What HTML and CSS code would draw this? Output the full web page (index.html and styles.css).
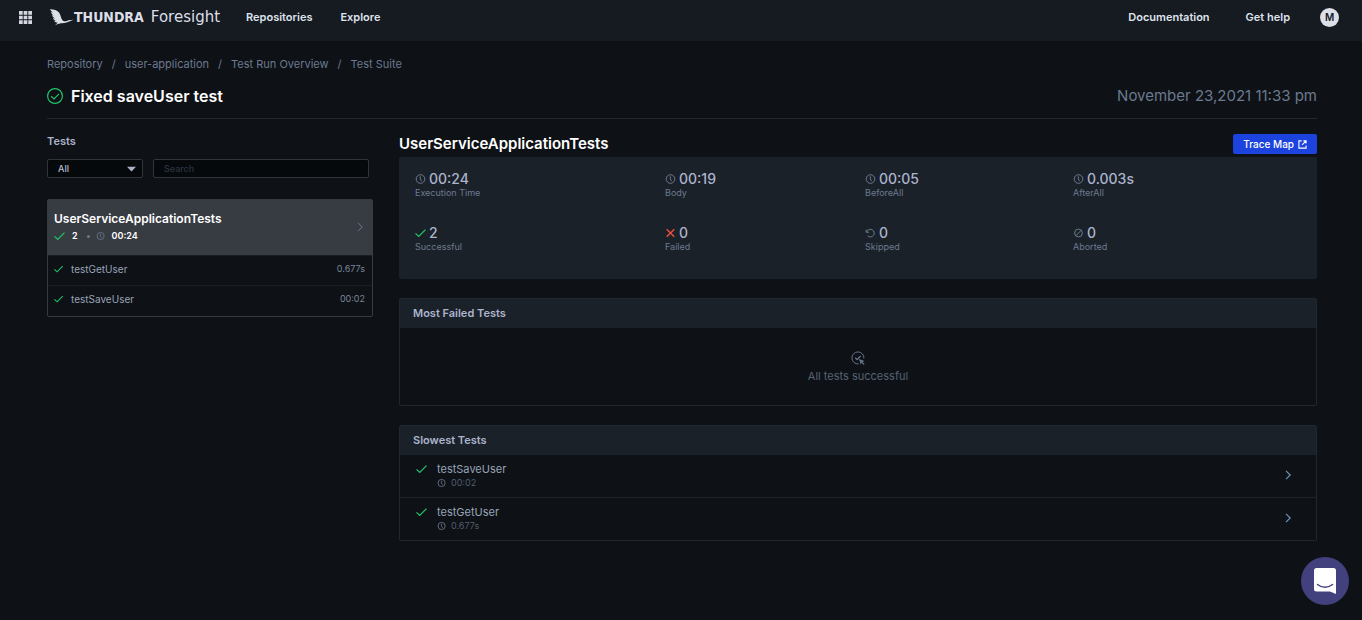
FILE: index.html
```html
<!DOCTYPE html>
<html lang="en">
<head>
<meta charset="utf-8">
<meta name="viewport" content="width=device-width, initial-scale=1">
<title>Thundra Foresight - Test Suite</title>
<link rel="stylesheet" href="styles.css">
</head>
<body>
<svg class="sprite" aria-hidden="true">
  <symbol id="clock" viewBox="0 0 12 12"><circle cx="5.500" cy="6" r="4.300"/><path d="M5.300 3.400v2.800l1.400 1.900"/></symbol>
  <symbol id="check" viewBox="0 0 12 12"><path d="M.5 6.400l3.200 3L10.500 2.600"/></symbol>
  <symbol id="cross" viewBox="0 0 12 12"><path d="M1.700 2.200l7.600 7.600M9.300 2.200l-7.600 7.600"/></symbol>
  <symbol id="undo" viewBox="0 0 12 12"><path d="M1.200 2.600v2.700h2.700M1.800 5A3.800 3.800 0 1 1 2.700 8.800"/></symbol>
  <symbol id="abort" viewBox="0 0 12 12"><circle cx="5.500" cy="6" r="3.900"/><path d="M2.900 8.600l5.200-5.200"/></symbol>
  <symbol id="chevron" viewBox="0 0 12 12"><path d="M4 1.800L8.200 6 4 10.200"/></symbol>
</svg>

<header class="topbar">
  <button class="apps" aria-label="Apps">
    <svg viewBox="0 0 14 14"><path d="M0 0h4v4H0zM5 0h4v4H5zM10 0h4v4h-4zM0 5h4v4H0zM5 5h4v4H5zM10 5h4v4h-4zM0 10h4v4H0zM5 10h4v4H5zM10 10h4v4h-4z"/></svg>
  </button>
  <a class="brand" href="#">
    <svg class="bird" viewBox="0 0 24 17"><path d="M0 .3C3.500.2 7 1.200 9 3.600c1.700 2 1.600 4.800 3.200 7.500 1.300 1.500 3 1.500 5.300.7 1-.9 2.200-1.100 3.100-.6l3.200-.7-3 1.500c-2.400.6-4.500 1.800-6.800 2-2.400.2-4.300.4-6.200 1.100L5 16.300l2.700-2.500c-1.500-.2-2.900-1-3.700-2.100l2.300.3C4.700 11.200 3.300 10.200 2.800 8.900l2.300.7C3.600 8.500 2.300 7.300 1.800 5.900l2.400.9C2.400 5.600 1.200 4.200.9 2.900l2.300.9C1.600 2.800.6 1.600 0 .3z"/></svg>
    <span class="brand-name">THUNDRA</span><span class="brand-product">Foresight</span>
  </a>
  <nav class="nav">
    <a href="#">Repositories</a>
    <a href="#">Explore</a>
  </nav>
  <nav class="nav nav-right">
    <a href="#">Documentation</a>
    <a href="#">Get help</a>
  </nav>
  <button class="avatar" aria-label="Account">M</button>
</header>

<main class="page">
  <nav class="crumbs" aria-label="Breadcrumb">
    <a href="#">Repository</a><span>/</span><a href="#">user-application</a><span>/</span><a href="#">Test Run Overview</a><span>/</span><a href="#">Test Suite</a>
  </nav>
  <div class="title-row">
    <svg class="title-icon" viewBox="0 0 16 16"><circle cx="8" cy="8" r="7.400"/><path d="M4.200 8.300l2.800 2.600 5-5"/></svg>
    <h1>Fixed saveUser test</h1>
    <time>November 23,2021 11:33 pm</time>
  </div>

  <div class="columns">
    <aside class="sidebar">
      <h2 class="side-title">Tests</h2>
      <div class="filters">
        <div class="select-wrap">
          <select aria-label="Status"><option>All</option></select>
          <svg viewBox="0 0 10 6"><path d="M0 .5h10L5 5.800z"/></svg>
        </div>
        <input class="search" type="text" placeholder="Search" aria-label="Search tests">
      </div>
      <div class="suite">
        <a class="suite-head" href="#">
          <div>
            <div class="suite-name">UserServiceApplicationTests</div>
            <div class="suite-meta">
              <svg class="icon green"><use href="#check"/></svg><span>2</span><i class="dot"></i><svg class="icon small"><use href="#clock"/></svg><span>00:24</span>
            </div>
          </div>
          <svg class="icon"><use href="#chevron"/></svg>
        </a>
        <a class="case" href="#"><svg class="icon small green"><use href="#check"/></svg><span>testGetUser</span><span class="case-time">0.677s</span></a>
        <a class="case" href="#"><svg class="icon small green"><use href="#check"/></svg><span>testSaveUser</span><span class="case-time">00:02</span></a>
      </div>
    </aside>

    <section class="detail">
      <div class="detail-head">
        <h2>UserServiceApplicationTests</h2>
        <button class="trace">Trace Map
          <svg viewBox="0 0 10 10"><path d="M4 1H1v8h8V6M6 1h3v3M9 1L4.500 5.500"/></svg>
        </button>
      </div>
      <dl class="stats">
        <div><dd><svg class="icon"><use href="#clock"/></svg>00:24</dd><dt>Execution Time</dt></div>
        <div><dd><svg class="icon"><use href="#clock"/></svg>00:19</dd><dt>Body</dt></div>
        <div><dd><svg class="icon"><use href="#clock"/></svg>00:05</dd><dt>BeforeAll</dt></div>
        <div><dd><svg class="icon"><use href="#clock"/></svg>0.003s</dd><dt>AfterAll</dt></div>
        <div><dd><svg class="icon green"><use href="#check"/></svg>2</dd><dt>Successful</dt></div>
        <div><dd><svg class="icon red"><use href="#cross"/></svg>0</dd><dt>Failed</dt></div>
        <div><dd><svg class="icon"><use href="#undo"/></svg>0</dd><dt>Skipped</dt></div>
        <div><dd><svg class="icon"><use href="#abort"/></svg>0</dd><dt>Aborted</dt></div>
      </dl>

      <section class="panel">
        <h3>Most Failed Tests</h3>
        <div class="empty">
          <svg viewBox="0 0 14 14"><path d="M7.500 12.900A6 6 0 1 1 12.900 7.500"/><path class="tick" d="M4.200 6.800l1.900 1.700 3.500-3.500"/><path class="pointer" d="M8 8l5.600 2-2.200.9 2.200 2.200-.8.800-2.200-2.200-.8 2z"/></svg>
          <p>All tests successful</p>
        </div>
      </section>

      <section class="panel">
        <h3>Slowest Tests</h3>
        <a class="slow" href="#">
          <svg class="icon green"><use href="#check"/></svg>
          <div><div class="slow-name">testSaveUser</div><div class="slow-time"><svg class="icon small"><use href="#clock"/></svg>00:02</div></div>
          <svg class="icon blue"><use href="#chevron"/></svg>
        </a>
        <a class="slow" href="#">
          <svg class="icon green"><use href="#check"/></svg>
          <div><div class="slow-name">testGetUser</div><div class="slow-time"><svg class="icon small"><use href="#clock"/></svg>0.677s</div></div>
          <svg class="icon blue"><use href="#chevron"/></svg>
        </a>
      </section>
    </section>
  </div>
</main>

<button class="chat" aria-label="Open chat">
  <svg viewBox="0 0 22 26"><path d="M2.500 0h17A2.500 2.500 0 0 1 22 2.500V26l-6-2.500H2.500A2.500 2.500 0 0 1 0 21V2.500A2.500 2.500 0 0 1 2.500 0z"/><path class="smile" d="M3.500 16.500c4.500 3.600 10.500 3.600 15 0"/></svg>
</button>
</body>
</html>
```
FILE: styles.css
```css
* { box-sizing: border-box; }
body {
  margin: 0;
  min-height: 100vh;
  background: #0e1115;
  color: #abb4cc;
  font: 11px/16px Inter, "Liberation Sans", sans-serif;
}
h1, h2, h3, p, dl, dd, dt { margin: 0; font-weight: 500; }
a { color: inherit; text-decoration: none; }
button { border: 0; padding: 0; font: inherit; cursor: pointer; }
.sprite { position: absolute; width: 0; height: 0; }

.icon { width: 12px; height: 12px; flex: none; fill: none; stroke: #6c7a8e; stroke-width: 1; }
.icon.small { width: 10px; height: 10px; }
.icon.green { stroke: #22c36b; stroke-width: 1.300; }
.icon.red { stroke: #f0503c; stroke-width: 1.400; }
.icon.blue { stroke: #6d93b8; stroke-width: 1.200; }

.topbar {
  display: flex;
  align-items: center;
  height: 41px;
  padding: 0 23px 7px 19px;
  background: #161a21;
  color: #dfe3ec;
}
.apps { width: 13px; height: 13px; background: none; }
.apps svg { display: block; fill: #d4d7e0; }
.brand { display: flex; align-items: center; margin-left: 18px; color: #dcdfe8; }
.bird { width: 24px; height: 17px; fill: #dcdfe8; }
.brand-name { font: bold 14px/20px "DejaVu Sans Condensed", "DejaVu Sans", sans-serif; }
.brand-product { margin-left: 7px; font: 15px/20px "DejaVu Sans", sans-serif; }
.nav { display: flex; gap: 28px; margin-left: 26px; font-weight: 600; }
.nav-right { gap: 36px; margin-left: auto; }
.avatar {
  width: 19px;
  height: 19px;
  margin-left: 30px;
  border-radius: 50%;
  background: #dcdfe8;
  color: #16181f;
  font-size: 10px;
  font-weight: 600;
}

.page { padding: 15px 45px 40px 47px; }
.crumbs { display: flex; gap: 9px; color: #6b7a90; }
.title-row {
  display: flex;
  align-items: center;
  gap: 8px;
  padding: 13px 0 11px;
  border-bottom: 1px solid #222831;
}
.title-icon { width: 16px; height: 16px; fill: none; stroke: #22c36b; stroke-width: 1.200; }
h1 { color: #fff; font-size: 16px; line-height: 22px; font-weight: 600; }
time { margin-left: auto; color: #6b7a90; font-size: 15px; font-weight: 400; }

.columns { display: grid; grid-template-columns: 326px 1fr; gap: 26px; align-items: start; padding-top: 14px; }

.side-title { font-size: 11px; line-height: 16px; font-weight: 600; }
.filters { display: flex; gap: 10px; padding: 10px 4px 0 0; }
.select-wrap { position: relative; width: 96px; }
.select-wrap svg { position: absolute; right: 7px; top: 7px; width: 9px; height: 6px; fill: #a9b3c8; pointer-events: none; }
select, .search {
  display: block;
  width: 100%;
  height: 19px;
  padding: 0 10px;
  border: 1px solid #30353d;
  border-radius: 2px;
  background: #06090c;
  color: #b5bed2;
  font: 500 9px/16px Inter, sans-serif;
  appearance: none;
}
.search { flex: 1; }
.search::placeholder { color: #2b3442; }
.suite { margin-top: 21px; border: 1px solid #363b43; border-radius: 2px; }
.suite-head {
  display: flex;
  align-items: center;
  justify-content: space-between;
  padding: 10px 6px 11px;
  background: #373b42;
  color: #fff;
  font-weight: 600;
}
.suite-name { font-size: 12px; line-height: 18px; }
.suite-meta { display: flex; align-items: center; gap: 6px; font-size: 9px; }
.dot { width: 3px; height: 3px; margin-left: 3px; border-radius: 50%; background: #6c7a8e; }
.case {
  display: flex;
  align-items: center;
  gap: 7px;
  padding: 5px 7px 8px 6px;
  border-top: 1px solid #191e24;
  font-size: 10px;
  color: #98a4b8;
}
.case:last-child { padding-bottom: 9px; }
.case-time { margin-left: auto; color: #77859a; font-size: 9px; }

.detail-head { display: flex; align-items: flex-end; justify-content: space-between; }
.detail-head h2 { color: #fff; font-size: 15px; line-height: 21px; font-weight: 600; }
.trace {
  display: flex;
  align-items: center;
  gap: 4px;
  height: 20px;
  padding: 0 10px;
  border-radius: 2px;
  background: #1c43dd;
  color: #fff;
  font-size: 10px;
  font-weight: 500;
}
.trace svg { width: 9px; height: 9px; fill: none; stroke: #fff; stroke-width: 1.200; }
.stats {
  display: grid;
  grid-template-columns: 250fr 200fr 208fr 228fr;
  row-gap: 26px;
  margin: 3px 0 19px;
  padding: 13px 16px 27px;
  border-radius: 2px;
  background: #1b2129;
}
.stats > div { display: flex; flex-direction: column; }
.stats dd { display: flex; align-items: center; gap: 2px; font-size: 14px; line-height: 18px; }
.stats dt { color: #6b7a90; font-size: 9px; line-height: 10px; font-weight: 400; }

.panel { margin-bottom: 19px; border: 1px solid #202731; border-radius: 2px; }
.panel h3 { padding: 6px 13px 7px; background: #1b2129; font-size: 11px; line-height: 16px; font-weight: 600; }
.empty { padding: 23px 0 21px; text-align: center; color: #566375; }
.empty svg { display: block; width: 14px; height: 14px; margin: 0 auto 3px; fill: none; stroke: #66748a; }
.empty .tick { stroke-width: 1.300; }
.empty .pointer { fill: #66748a; stroke: none; }
.empty p { font-weight: 400; }
.slow { display: flex; align-items: center; padding: 6px 22px 8px 16px; }
.slow + .slow { border-top: 1px solid #1d2329; }
.slow > .green { align-self: flex-start; margin: 2px 9px 0 0; }
.slow > .blue { margin-left: auto; }
.slow-name { color: #98a4b8; }
.slow-time { display: flex; align-items: center; gap: 4px; color: #515d6e; font-size: 9px; line-height: 12px; }

.chat {
  position: fixed;
  right: 13px;
  bottom: 15px;
  display: grid;
  place-items: center;
  width: 48px;
  height: 48px;
  border-radius: 50%;
  background: #43407e;
}
.chat svg { width: 22px; height: 26px; fill: #fff; }
.chat .smile { fill: none; stroke: #43407e; stroke-width: 1.500; stroke-linecap: round; }
```
